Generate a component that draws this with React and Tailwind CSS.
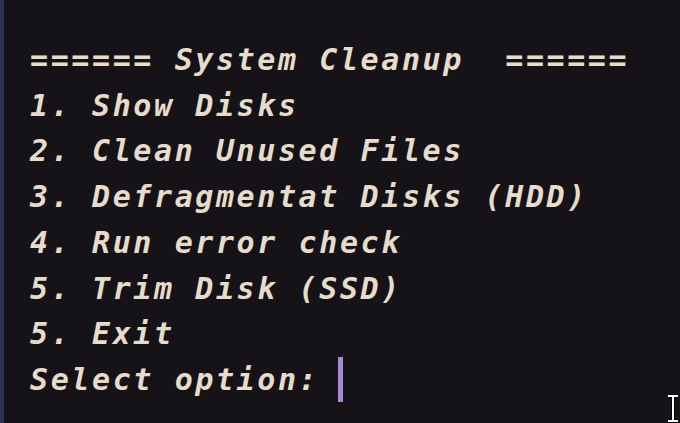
export default function App() {
  const lines = [
    "====== System Cleanup  ======",
    "1. Show Disks",
    "2. Clean Unused Files",
    "3. Defragmentat Disks (HDD)",
    "4. Run error check",
    "5. Trim Disk (SSD)",
    "5. Exit",
  ];
  return (
    <div className="relative w-[680px] h-[423px] overflow-hidden bg-[#151318] flex">
      <div className="w-[4px] h-full bg-[#2c3354]" />
      <div
        className="flex-1 pl-[26px] pt-[37px] text-[#e6dccb] italic font-bold text-[30px] leading-[45.7px] tracking-[2.6px] whitespace-pre"
        style={{ fontFamily: '"DejaVu Sans Mono", monospace' }}
      >
        {lines.map((l, i) => (
          <div key={i}>{l}</div>
        ))}
        <div className="flex items-center">
          <span>Select option: </span>
          <span className="inline-block w-[5px] h-[45px] bg-[#a58ad6] ml-[-2px]" />
        </div>
      </div>
      <svg className="absolute left-[666px] top-[394px]" width="14" height="29" viewBox="0 0 14 29">
        <path d="M2 2h10M7 2v25M2 27h10" stroke="#000" strokeWidth="4" fill="none" />
        <path d="M2 2h10M7 2v25M2 27h10" stroke="#fff" strokeWidth="2" fill="none" />
      </svg>
    </div>
  );
}
